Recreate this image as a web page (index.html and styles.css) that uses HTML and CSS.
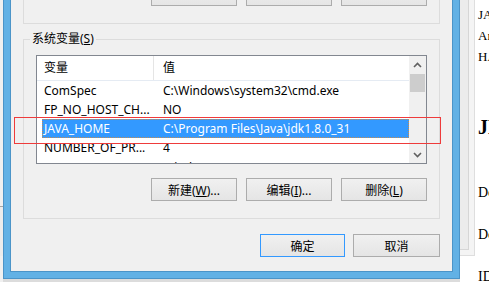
FILE: index.html
```html
<!DOCTYPE html>
<html lang="zh-CN">
<head>
  <meta charset="UTF-8" />
  <title>环境变量</title>
  <link rel="stylesheet" href="styles.css">
</head>
<body>
  <div class="screen">
    <div class="bg-left"><div class="bg-left-panel"></div></div>

    <div class="dialog">
      <div class="client">
        <!-- user variables (mostly scrolled off the top) -->
        <div class="group-top">
          <div class="btn-row">
            <button class="btn">新建(<u>N</u>)...</button>
            <button class="btn">编辑(<u>E</u>)...</button>
            <button class="btn">删除(<u>D</u>)</button>
          </div>
        </div>

        <fieldset class="group">
          <legend>系统变量(<u>S</u>)</legend>
          <div class="list">
            <div class="list-main">
              <div class="list-head">
                <div class="hcell c1">变量</div>
                <div class="hcell c2">值</div>
              </div>
              <div class="row"><span class="cell c1">ComSpec</span><span class="cell c2">C:\Windows\system32\cmd.exe</span></div>
              <div class="row"><span class="cell c1">FP_NO_HOST_CH...</span><span class="cell c2">NO</span></div>
              <div class="row selected"><span class="cell c1">JAVA_HOME</span><span class="cell c2">C:\Program Files\Java\jdk1.8.0_31</span></div>
              <div class="row"><span class="cell c1">NUMBER_OF_PR...</span><span class="cell c2">4</span></div>
              <div class="row"><span class="cell c1">OS</span><span class="cell c2">Windows_NT</span></div>
            </div>
            <div class="scrollbar">
              <div class="sb-btn">
                <svg width="9" height="6" viewBox="0 0 9 6"><path d="M1 5 L4.5 1.5 L8 5" /></svg>
              </div>
              <div class="sb-thumb"></div>
              <div class="sb-track"></div>
              <div class="sb-btn">
                <svg width="9" height="6" viewBox="0 0 9 6"><path d="M1 1 L4.5 4.5 L8 1" /></svg>
              </div>
            </div>
          </div>
          <div class="btn-row">
            <button class="btn">新建(<u>W</u>)...</button>
            <button class="btn">编辑(<u>I</u>)...</button>
            <button class="btn">删除(<u>L</u>)</button>
          </div>
        </fieldset>

        <div class="dlg-row">
          <button class="btn btn-default">确定</button>
          <button class="btn btn-wide">取消</button>
        </div>
      </div>
    </div>

    <div class="bg-right">
      <div class="bg-frame"><div class="bg-frame-inner"></div></div>
      <div class="bg-page">
        <p class="t">JAVA_HOME</p>
        <p class="t">And</p>
        <p class="t">HADOOP</p>
        <h3 class="t-head">JDK</h3>
        <p class="t t-gap">Download</p>
        <p class="t t-gap">Done</p>
        <p class="t t-gap">IDEA</p>
      </div>
    </div>

    <div class="mark"></div>
  </div>
</body>
</html>
```

FILE: styles.css
```css
* {
  box-sizing: border-box;
}

body {
  margin: 0;
  background: #dcdcdc;
  font-family: "Noto Sans", "Noto Sans CJK SC", sans-serif;
  font-size: 12px;
  color: #000;
}

.screen {
  position: relative;
  display: flex;
  align-items: flex-start;
  width: 489px;
  height: 282px;
  overflow: hidden;
}

/* window behind, left edge */
.bg-left {
  flex: none;
  width: 3px;
  height: 282px;
  background: #f0f0f0;
}

.bg-left-panel {
  margin-top: 206px;
  height: 50px;
  border-top: 1px solid #a5a5a5;
  background: #ececec;
}

/* dialog frame */
.dialog {
  flex: none;
  width: 457px;
  margin-top: -33px;
  padding: 0 6px 6px;
  background: #62b1e5;
  border: 1px solid #4b94c8;
}

.client {
  padding: 0 12px 14px;
  background: #f0f0f0;
  border: 1px solid #4b94c8;
}

.group-top {
  padding: 13px 12px 17px;
  border: 1px solid #dcdcdc;
}

.group {
  margin: 7px 0 0;
  padding: 0 12px 17px;
  border: 1px solid #dcdcdc;
  min-width: 0;
}

.group legend {
  margin-left: -6px;
  padding: 0 2px;
  line-height: 16px;
}

.btn-row {
  display: flex;
  justify-content: flex-end;
  gap: 9px;
}

.group .btn-row {
  margin-top: 14px;
}

.btn {
  width: 86px;
  height: 23px;
  padding: 0;
  border: 1px solid #acacac;
  background: linear-gradient(#f0f0f0, #e5e5e5);
  font: inherit;
  color: #000;
}

.group-top .btn {
  padding-bottom: 4px;
}

.btn-default {
  width: 85px;
  border-color: #3399ff;
}

.btn-wide {
  width: 87px;
}

.dlg-row {
  display: flex;
  justify-content: flex-end;
  gap: 8px;
  margin-top: 15px;
}

/* list view */
.list {
  display: flex;
  height: 109px;
  margin-top: 8px;
  border: 1px solid #828790;
  background: #fff;
}

.list-main {
  flex: 1;
  overflow: hidden;
}

.list-head {
  display: flex;
  height: 25px;
  line-height: 24px;
  border-bottom: 1px solid #e5ebf3;
}

.hcell.c1 {
  width: 117px;
  padding-left: 7px;
  border-right: 1px solid #e5e5e5;
}

.hcell.c2 {
  padding-left: 9px;
}

.row {
  display: flex;
  height: 19px;
  margin-left: 5px;
  line-height: 19px;
  white-space: nowrap;
}

.row:last-child {
  padding-top: 1px;
}

.cell.c1 {
  width: 112px;
  padding-left: 2px;
}

.cell.c2 {
  padding-left: 9px;
}

.row.selected {
  background: #3399ff;
  color: #fff;
  outline: 1px dotted #c68b4f;
  outline-offset: -1px;
}

.scrollbar {
  display: flex;
  flex-direction: column;
  width: 17px;
  background: #f0f0f0;
}

.sb-btn {
  display: flex;
  align-items: center;
  justify-content: center;
  height: 17px;
}

.sb-btn path {
  fill: none;
  stroke: #606060;
  stroke-width: 1.6;
}

.sb-thumb {
  height: 18px;
  margin: 1px 1px 0;
  background: #cdcdcd;
}

.sb-track {
  flex: 1;
}

/* page behind, right edge */
.bg-right {
  display: flex;
  flex: 1;
  min-width: 0;
  height: 282px;
  background: #fff;
}

.bg-frame {
  flex: none;
  width: 15px;
  height: 256px;
  background: #f4f4f4;
  border-right: 1px solid #dedede;
  border-bottom: 1px solid #dedede;
}

.bg-frame-inner {
  width: 9px;
  height: 250px;
  background: #ececec;
  border-right: 1px solid #d6d6d6;
  border-bottom: 1px solid #d6d6d6;
}

.bg-page {
  flex: 1;
  min-width: 0;
  padding: 4px 0 0 3px;
  overflow: hidden;
  white-space: nowrap;
  font-family: "Liberation Serif", serif;
  font-size: 13px;
}

.bg-page .t {
  margin: 0;
  line-height: 21px;
}

.bg-page .t-head {
  margin: 48px 0 0;
  font-size: 20px;
  line-height: 24px;
}

.bg-page .t-gap {
  margin-top: 21px;
  font-size: 14px;
}

.bg-page .t-head + .t-gap {
  margin-top: 43px;
}

/* red annotation box */
.mark {
  position: absolute;
  left: 14px;
  top: 117px;
  width: 427px;
  height: 27px;
  border: 1px solid #ee3b3b;
}
```
